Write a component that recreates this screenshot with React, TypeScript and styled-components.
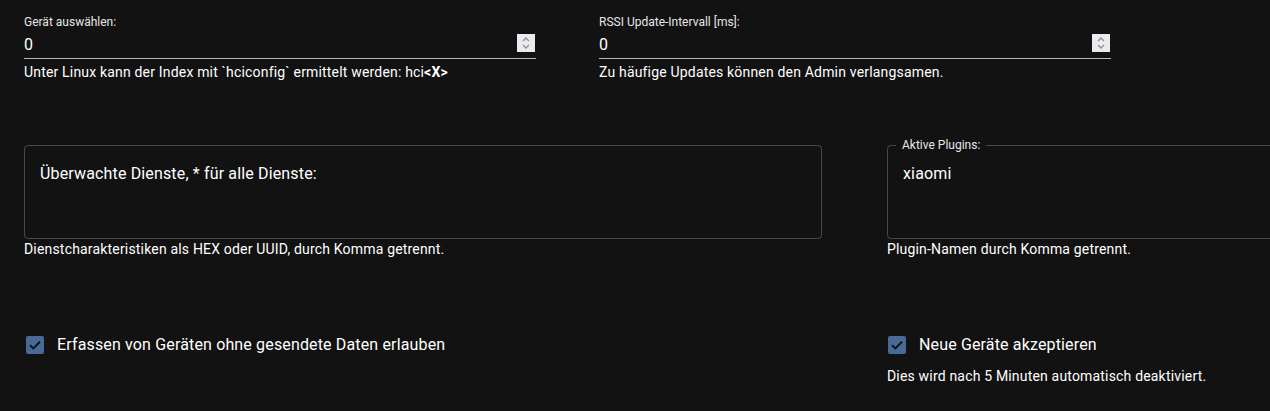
import styled, { createGlobalStyle } from 'styled-components';

const GlobalStyle = createGlobalStyle`
  html, body {
    margin: 0;
    padding: 0;
    background: #121212;
    overflow: hidden;
  }
  body {
    font-family: Roboto, "Liberation Sans", Arial, sans-serif;
    color: #fff;
  }
`;

const Page = styled.div`
  width: 1270px;
  height: 411px;
  overflow: hidden;
  padding: 14px 0 0 24px;
  box-sizing: border-box;
  display: flex;
  flex-direction: column;
`;

const Row = styled.div<{ gap: number; top?: number }>`
  display: flex;
  align-items: flex-start;
  gap: ${p => p.gap}px;
  margin-top: ${p => p.top ?? 0}px;
`;

const Field = styled.div<{ width: number }>`
  width: ${p => p.width}px;
  flex-shrink: 0;
  display: flex;
  flex-direction: column;
`;

const SmallLabel = styled.label`
  font-size: 12px;
  line-height: 17px;
  color: #e6e6e6;
`;

const InputRow = styled.div`
  display: flex;
  align-items: center;
  height: 28px;
  padding: 0 1px 0 0;
  border-bottom: 1px solid rgba(255, 255, 255, 0.7);
  box-sizing: border-box;
`;

const Value = styled.span`
  flex: 1;
  font-size: 16px;
  line-height: 23px;
  letter-spacing: 0.15px;
  padding-top: 1px;
  padding-bottom: 2px;
`;

const Spinner = styled.div`
  width: 18px;
  height: 18px;
  margin-bottom: 3px;
  background: #ebebef;
  display: flex;
  align-items: center;
  justify-content: center;

  svg {
    display: block;
  }
`;

const Helper = styled.p<{ top?: number }>`
  margin: ${p => p.top ?? 3}px 0 0;
  font-size: 14px;
  line-height: 20px;
  letter-spacing: 0.18px;
  color: #fff;

  b {
    font-weight: 700;
  }
`;

const Box = styled.div`
  position: relative;
  height: 94px;
  border: 1px solid rgba(255, 255, 255, 0.23);
  border-radius: 4px;
  box-sizing: border-box;
  padding: 16px 14px 0 15px;
`;

const BoxText = styled.div`
  font-size: 16px;
  line-height: 23px;
  letter-spacing: 0.15px;
  color: #fff;
`;

const Legend = styled.span`
  position: absolute;
  top: -9px;
  left: 8px;
  padding: 0 6px;
  background: #121212;
  font-size: 12px;
  line-height: 16px;
  color: #e6e6e6;
`;

const CheckRow = styled.label<{ indent?: number }>`
  display: flex;
  align-items: center;
  gap: 13px;
  padding-left: ${p => p.indent ?? 2}px;
  font-size: 16px;
  line-height: 24px;
  letter-spacing: 0.15px;
  color: #fff;
`;

const CheckBox = styled.span`
  width: 18px;
  height: 18px;
  border-radius: 2px;
  background: #476b96;
  display: flex;
  align-items: center;
  justify-content: center;
  flex-shrink: 0;
`;

function NumberSpinner() {
  return (
    <Spinner>
      <svg width="10" height="14" viewBox="0 0 10 14" fill="none" stroke="#8e8e99" strokeWidth="1.3">
        <path d="M2 5 L5 2 L8 5" />
        <path d="M2 9 L5 12 L8 9" />
      </svg>
    </Spinner>
  );
}

function Check() {
  return (
    <CheckBox>
      <svg width="14" height="14" viewBox="0 0 14 14" fill="none" stroke="#121212" strokeWidth="2">
        <path d="M2 7.2 L5.3 10.4 L12 3.8" />
      </svg>
    </CheckBox>
  );
}

export default function App() {
  return (
    <>
      <GlobalStyle />
      <Page>
        <Row gap={63}>
          <Field width={512}>
            <SmallLabel>Gerät auswählen:</SmallLabel>
            <InputRow>
              <Value>0</Value>
              <NumberSpinner />
            </InputRow>
            <Helper>
              Unter Linux kann der Index mit `hciconfig` ermittelt werden: hci<b>&lt;X&gt;</b>
            </Helper>
          </Field>
          <Field width={512}>
            <SmallLabel>RSSI Update-Intervall [ms]:</SmallLabel>
            <InputRow>
              <Value>0</Value>
              <NumberSpinner />
            </InputRow>
            <Helper>Zu häufige Updates können den Admin verlangsamen.</Helper>
          </Field>
        </Row>

        <Row gap={65} top={63}>
          <Field width={798}>
            <Box>
              <BoxText>Überwachte Dienste, * für alle Dienste:</BoxText>
            </Box>
            <Helper top={0}>Dienstcharakteristiken als HEX oder UUID, durch Komma getrennt.</Helper>
          </Field>
          <Field width={420}>
            <Box>
              <Legend>Aktive Plugins:</Legend>
              <BoxText>xiaomi</BoxText>
            </Box>
            <Helper top={0}>Plugin-Namen durch Komma getrennt.</Helper>
          </Field>
        </Row>

        <Row gap={0} top={74}>
          <Field width={863}>
            <CheckRow>
              <Check />
              Erfassen von Geräten ohne gesendete Daten erlauben
            </CheckRow>
          </Field>
          <Field width={380}>
            <CheckRow indent={1}>
              <Check />
              Neue Geräte akzeptieren
            </CheckRow>
            <Helper top={9}>Dies wird nach 5 Minuten automatisch deaktiviert.</Helper>
          </Field>
        </Row>
      </Page>
    </>
  );
}
